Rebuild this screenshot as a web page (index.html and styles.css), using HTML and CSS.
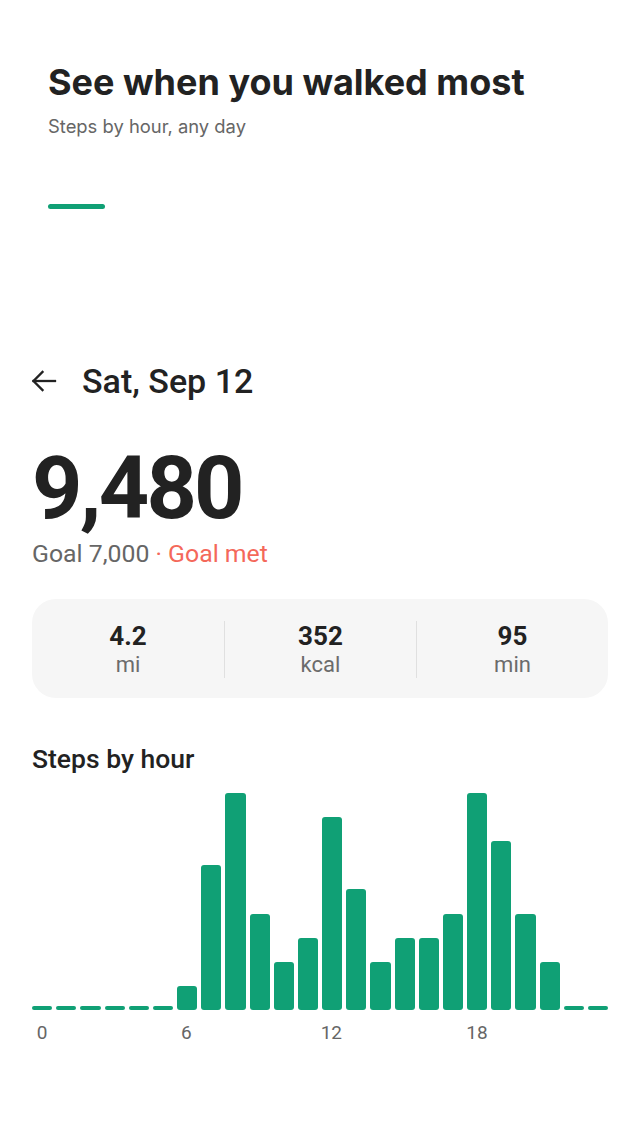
FILE: index.html
```html
<!doctype html>
<html lang="en">
<head>
  <meta charset="utf-8">
  <title>Steps by hour</title>
  <link rel="stylesheet" href="styles.css">
</head>
<body>
  <header class="intro">
    <h1>See when you walked most</h1>
    <p class="intro-sub">Steps by hour, any day</p>
    <div class="intro-accent"></div>
  </header>

  <main class="day">
    <div class="day-head">
      <button type="button" class="back" aria-label="Back">
        <svg width="28" height="28" viewBox="0 0 28 28" fill="none" stroke="#222" stroke-width="2.3" stroke-linecap="square">
          <path d="M25 14H3.5"/>
          <path d="M12.5 5L3.5 14l9 9"/>
        </svg>
      </button>
      <h2 class="day-date">Sat, Sep 12</h2>
    </div>

    <div class="total">9,480</div>
    <div class="goal">Goal 7,000 <span class="goal-met">· Goal met</span></div>

    <div class="stats">
      <div class="stat">
        <div class="stat-value">4.2</div>
        <div class="stat-unit">mi</div>
      </div>
      <div class="stat">
        <div class="stat-value">352</div>
        <div class="stat-unit">kcal</div>
      </div>
      <div class="stat">
        <div class="stat-value">95</div>
        <div class="stat-unit">min</div>
      </div>
    </div>

    <h3 class="chart-title">Steps by hour</h3>
    <div class="chart">
      <div class="bar" style="height:0%"></div>
      <div class="bar" style="height:0%"></div>
      <div class="bar" style="height:0%"></div>
      <div class="bar" style="height:0%"></div>
      <div class="bar" style="height:0%"></div>
      <div class="bar" style="height:0%"></div>
      <div class="bar" style="height:11.11%"></div>
      <div class="bar" style="height:66.67%"></div>
      <div class="bar" style="height:100%"></div>
      <div class="bar" style="height:44.44%"></div>
      <div class="bar" style="height:22.22%"></div>
      <div class="bar" style="height:33.33%"></div>
      <div class="bar" style="height:88.89%"></div>
      <div class="bar" style="height:55.56%"></div>
      <div class="bar" style="height:22.22%"></div>
      <div class="bar" style="height:33.33%"></div>
      <div class="bar" style="height:33.33%"></div>
      <div class="bar" style="height:44.44%"></div>
      <div class="bar" style="height:100%"></div>
      <div class="bar" style="height:77.78%"></div>
      <div class="bar" style="height:44.44%"></div>
      <div class="bar" style="height:22.22%"></div>
      <div class="bar" style="height:0%"></div>
      <div class="bar" style="height:0%"></div>
    </div>
    <div class="axis">
      <span>0</span><span></span><span></span><span></span><span></span><span></span>
      <span>6</span><span></span><span></span><span></span><span></span><span></span>
      <span>12</span><span></span><span></span><span></span><span></span><span></span>
      <span>18</span><span></span><span></span><span></span><span></span><span></span>
    </div>
  </main>
</body>
</html>
```

FILE: styles.css
```css
body {
  margin: 0;
  background: #fff;
  color: #222;
  font-family: Roboto, "Noto Sans", sans-serif;
}

/* intro */
.intro {
  padding: 60px 48px 0;
  font-family: Inter, "Noto Sans", sans-serif;
}
.intro h1 {
  margin: 0;
  font-size: 36px;
  line-height: 44px;
  font-weight: 700;
  color: #222;
}
.intro-sub {
  margin: 10px 0 0;
  font-size: 18.4px;
  line-height: 24px;
  color: #666;
}
.intro-accent {
  width: 57px;
  height: 5px;
  margin-top: 66px;
  border-radius: 3px;
  background: #10a075;
}

/* day detail */
.day {
  padding: 152px 32px 40px;
}
.day-head {
  display: flex;
  align-items: center;
  height: 40px;
  gap: 24px;
}
.back {
  display: flex;
  padding: 0;
  margin-left: -2px;
  border: 0;
  background: none;
  cursor: pointer;
}
.day-date {
  margin: 0;
  font-size: 34px;
  line-height: 40px;
  font-weight: 500;
}
.total {
  margin-top: 43px;
  font-size: 88px;
  line-height: 88px;
  font-weight: 700;
  letter-spacing: -2.75px;
}
.goal {
  margin-top: 8px;
  font-size: 24.8px;
  line-height: 28px;
  color: #666;
}
.goal-met {
  color: #f4685a;
}

.stats {
  display: grid;
  grid-template-columns: repeat(3, 1fr);
  margin-top: 31px;
  padding: 22px 0 20px;
  border-radius: 24px;
  background: #f6f6f6;
  text-align: center;
}
.stat + .stat {
  border-left: 1px solid #e0e0e0;
}
.stat-value {
  font-size: 26px;
  line-height: 30px;
  font-weight: 700;
}
.stat-unit {
  margin-top: 1px;
  font-size: 22px;
  line-height: 26px;
  color: #6b6b6b;
}

.chart-title {
  margin: 46px 0 0;
  font-size: 26.5px;
  line-height: 30px;
  font-weight: 500;
}
.chart {
  display: flex;
  align-items: flex-end;
  gap: 4px;
  height: 217px;
  margin-top: 19px;
}
.bar {
  flex: 1;
  min-height: 4px;
  border-radius: 3px;
  background: #10a075;
}
.axis {
  display: grid;
  grid-template-columns: repeat(24, 1fr);
  column-gap: 4px;
  margin-top: 12px;
  font-size: 19px;
  line-height: 22px;
  color: #666;
}
.axis span {
  display: flex;
  justify-content: center;
}
```
